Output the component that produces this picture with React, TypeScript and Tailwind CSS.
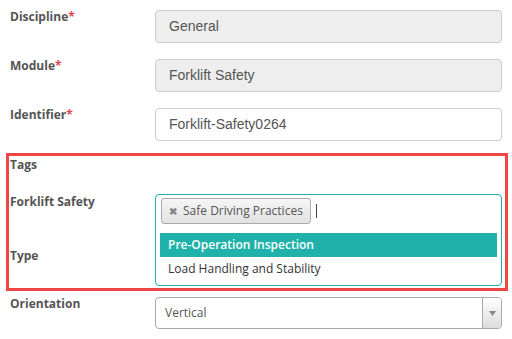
import React from "react";

const labelFont = { fontFamily: '"Open Sans", "Liberation Sans", sans-serif' };

function Label({ text, required }: { text: string; required?: boolean }) {
  return (
    <div className="w-[145px] shrink-0 text-[12px] leading-[14px] font-bold text-[#555]" style={labelFont}>
      {text}
      {required && <span className="text-[#e04848]">*</span>}
    </div>
  );
}

function TextInput({ value, disabled }: { value: string; disabled?: boolean }) {
  return (
    <div
      className={
        "flex-1 h-[33px] flex items-center px-[13px] rounded-[4px] border border-[#ccc] text-[14px] text-[#555] " +
        (disabled ? "bg-[#eeeeee]" : "bg-white")
      }
      style={{ fontFamily: '"Liberation Sans", Arial, sans-serif' }}
    >
      {value}
    </div>
  );
}

export default function App() {
  return (
    <div className="w-[512px] h-[339px] bg-white pl-[6px] pr-[4px] overflow-hidden">
      {/* 基本字段 */}
      <div className="flex flex-col gap-[16px] pt-[10px] pl-[4px] pr-[6px]">
        <div className="flex">
          <Label text="Discipline" required />
          <TextInput value="General" disabled />
        </div>
        <div className="flex">
          <Label text="Module" required />
          <TextInput value="Forklift Safety" disabled />
        </div>
        <div className="flex">
          <Label text="Identifier" required />
          <TextInput value="Forklift-Safety0264" />
        </div>
      </div>

      {/* 标签区 - 红框 */}
      <div className="mt-[12px] border-[3px] border-[#f04646] pl-[1px] pr-[3px] pb-[2px]">
        <div className="h-[38px] pt-[2px]">
          <Label text="Tags" />
        </div>
        <div className="flex">
          <div className="w-[145px] shrink-0 flex flex-col pt-[1px]">
            <Label text="Forklift Safety" />
            <div className="mt-[40px]">
              <Label text="Type" />
            </div>
          </div>
          <div
            className="flex-1 border border-[#20b2aa] rounded-[4px] pt-[3px] pb-[4px] text-[12px]"
            style={labelFont}
          >
            <div className="flex items-center pl-[5px]">
              <div className="h-[26px] flex items-center gap-[6px] px-[7px] rounded-[3px] border border-[#aaa] bg-gradient-to-b from-[#f6f6f6] to-[#e2e2e2] text-[#555]">
                <span className="text-[10px] text-[#888] font-bold">✖</span>
                <span>Safe Driving Practices</span>
              </div>
              <div className="ml-[5px] w-px h-[14px] bg-[#444]" />
            </div>
            <div className="mx-[4px] mt-[9px]">
              <div className="h-[24px] flex items-center pl-[8px] bg-[#20b2aa] text-white font-semibold">
                Pre-Operation Inspection
              </div>
              <div className="h-[24px] flex items-center pl-[8px] text-[#333]">Load Handling and Stability</div>
            </div>
          </div>
        </div>
      </div>

      {/* 方向 */}
      <div className="flex mt-[6px] pl-[4px] pr-[6px]">
        <Label text="Orientation" />
        <div className="flex-1 h-[32px] flex rounded-[4px] border border-[#aaa] bg-white overflow-hidden" style={labelFont}>
          <div className="flex-1 flex items-center pl-[9px] text-[12px] text-[#555]">Vertical</div>
          <div className="w-[19px] border-l border-[#aaa] bg-gradient-to-b from-[#ffffff] to-[#dcdcdc] flex items-center justify-center">
            <svg width="7" height="5" viewBox="0 0 7 5">
              <path d="M0 0 L7 0 L3.5 5 Z" fill="#888" />
            </svg>
          </div>
        </div>
      </div>
    </div>
  );
}
